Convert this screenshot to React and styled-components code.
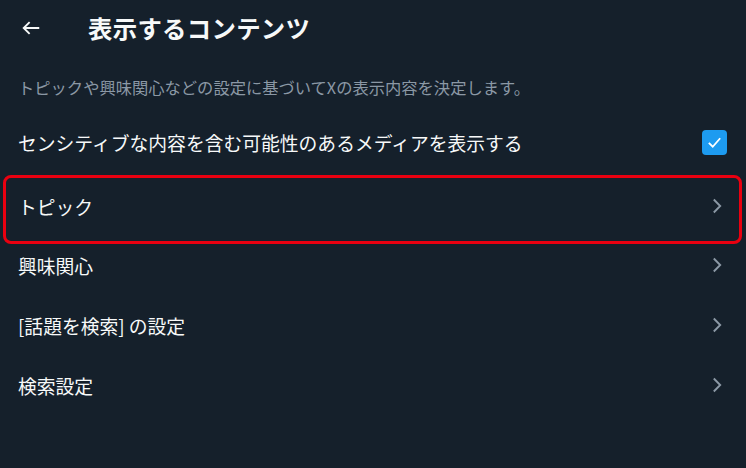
import React from "react";
import styled, { createGlobalStyle, css } from "styled-components";

const Global = createGlobalStyle`
  html, body { margin: 0; padding: 0; background: #15202b; }
  body { font-family: "Noto Sans CJK JP", "Noto Sans", sans-serif; color: #f7f9f9; }
`;

const Page = styled.div`
  width: 746px;
  height: 468px;
  background: #15202b;
  display: flex;
  flex-direction: column;
`;

const Header = styled.div`
  height: 56px;
  display: flex;
  align-items: center;
  padding-left: 13px;
  gap: 39px;
`;

const BackButton = styled.button`
  width: 36px;
  height: 36px;
  border: none;
  background: transparent;
  color: #f7f9f9;
  display: flex;
  align-items: center;
  justify-content: center;
  padding: 0;
`;

const Title = styled.h1`
  margin: 0;
  font-size: 24.4px;
  font-weight: 700;
  letter-spacing: 0.3px;
  line-height: 28px;
`;

const Description = styled.p`
  margin: 0;
  padding: 20px 18px 13px;
  font-size: 16.3px;
  line-height: 22px;
  color: #8b98a5;
  white-space: nowrap;
`;

const Row = styled.div`
  position: relative;
  height: ${(p) => p.$h || 60}px;
  padding-bottom: ${(p) => p.$pb || 0}px;
  box-sizing: border-box;
  flex-shrink: 0;
  display: flex;
  align-items: center;
  justify-content: space-between;
  padding-left: 18px;
  padding-right: 19px;
  font-size: 18.8px;
  color: #f7f9f9;
  white-space: nowrap;
  ${(p) =>
    p.$highlight &&
    css`
      &::after {
        content: "";
        position: absolute;
        left: 3px;
        right: 4px;
        top: -2px;
        bottom: -9px;
        border: 3px solid #ea0010;
        border-radius: 8px;
        pointer-events: none;
      }
    `}
`;

const Checkbox = styled.span`
  width: 25px;
  height: 25px;
  border-radius: 4px;
  background: #1d9bf0;
  display: flex;
  align-items: center;
  justify-content: center;
`;

const Chevron = () => (
  <svg width="14" height="18" viewBox="0 0 14 18" style={{ marginRight: "3px" }}>
    <path d="M3.8 2.5 L10.2 9 L3.8 15.5" fill="none" stroke="#8b98a5" strokeWidth="1.9" />
  </svg>
);

export default function App() {
  const rows = ["トピック", "興味関心", "[話題を検索] の設定", "検索設定"];
  return (
    <Page>
      <Global />
      <Header>
        <BackButton aria-label="戻る">
          <svg width="22" height="22" viewBox="0 0 24 24">
            <path
              d="M21 12H4 M10.5 5.5 L4 12 L10.5 18.5"
              fill="none"
              stroke="#f7f9f9"
              strokeWidth="2"
            />
          </svg>
        </BackButton>
        <Title>表示するコンテンツ</Title>
      </Header>
      <Description>トピックや興味関心などの設定に基づいてXの表示内容を決定します。</Description>
      <Row $h={66} $pb={4}>
        <span>センシティブな内容を含む可能性のあるメディアを表示する</span>
        <Checkbox>
          <svg width="17" height="17" viewBox="0 0 24 24">
            <path d="M4 12.5 L9.5 18 L20 6" fill="none" stroke="#fff" strokeWidth="2.6" />
          </svg>
        </Checkbox>
      </Row>
      {rows.map((r, i) => (
        <Row key={r} $h={i === 0 ? 58 : 60} $highlight={i === 0}>
          <span>{r}</span>
          <Chevron />
        </Row>
      ))}
    </Page>
  );
}
